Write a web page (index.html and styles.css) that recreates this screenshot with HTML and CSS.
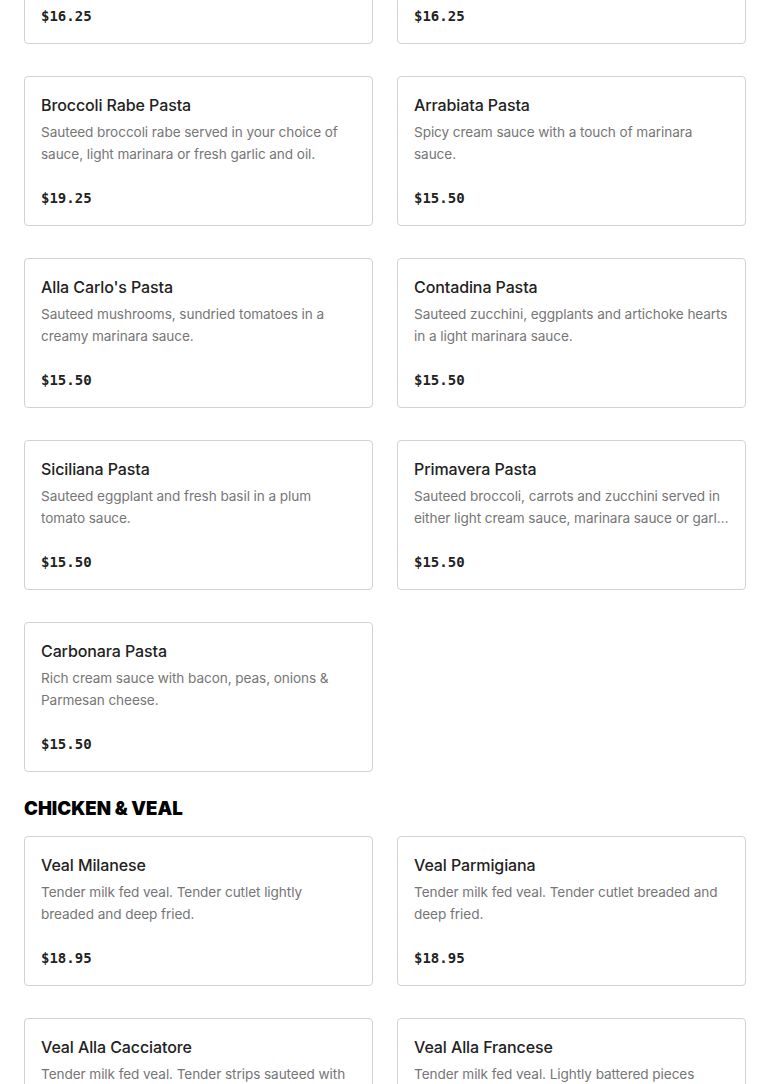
FILE: index.html
```html
<!DOCTYPE html>
<html>
<head>
<meta charset="utf-8">
<link rel="stylesheet" href="styles.css">
</head>
<body>
<main class="menu">
  <section class="section">
    <div class="grid">
      <div class="card"><h3 class="title">Penne alla Vodka</h3><p class="desc">Creamy tomato vodka sauce with a touch of parmesan cheese.</p><div class="price">$16.25</div></div>
      <div class="card"><h3 class="title">Fettuccine Alfredo</h3><p class="desc">Rich cream sauce with butter and parmesan cheese.</p><div class="price">$16.25</div></div>
      <div class="card"><h3 class="title">Broccoli Rabe Pasta</h3><p class="desc">Sauteed broccoli rabe served in your choice of sauce, light marinara or fresh garlic and oil.</p><div class="price">$19.25</div></div>
      <div class="card"><h3 class="title">Arrabiata Pasta</h3><p class="desc">Spicy cream sauce with a touch of marinara sauce.</p><div class="price">$15.50</div></div>
      <div class="card"><h3 class="title">Alla Carlo's Pasta</h3><p class="desc">Sauteed mushrooms, sundried tomatoes in a creamy marinara sauce.</p><div class="price">$15.50</div></div>
      <div class="card"><h3 class="title">Contadina Pasta</h3><p class="desc">Sauteed zucchini, eggplants and artichoke hearts in a light marinara sauce.</p><div class="price">$15.50</div></div>
      <div class="card"><h3 class="title">Siciliana Pasta</h3><p class="desc">Sauteed eggplant and fresh basil in a plum tomato sauce.</p><div class="price">$15.50</div></div>
      <div class="card"><h3 class="title">Primavera Pasta</h3><p class="desc">Sauteed broccoli, carrots and zucchini served in either light cream sauce, marinara sauce or garlic and oil.</p><div class="price">$15.50</div></div>
      <div class="card"><h3 class="title">Carbonara Pasta</h3><p class="desc">Rich cream sauce with bacon, peas, onions &amp; Parmesan cheese.</p><div class="price">$15.50</div></div>
    </div>
  </section>
  <section class="section">
    <h2 class="heading">CHICKEN &amp; VEAL</h2>
    <div class="grid">
      <div class="card"><h3 class="title">Veal Milanese</h3><p class="desc">Tender milk fed veal. Tender cutlet lightly breaded and deep fried.</p><div class="price">$18.95</div></div>
      <div class="card"><h3 class="title">Veal Parmigiana</h3><p class="desc">Tender milk fed veal. Tender cutlet breaded and deep fried.</p><div class="price">$18.95</div></div>
      <div class="card"><h3 class="title">Veal Alla Cacciatore</h3><p class="desc">Tender milk fed veal. Tender strips sauteed with mushrooms, peppers and onions.</p><div class="price">$18.95</div></div>
      <div class="card"><h3 class="title">Veal Alla Francese</h3><p class="desc">Tender milk fed veal. Lightly battered pieces sauteed in lemon butter sauce.</p><div class="price">$18.95</div></div>
    </div>
  </section>
</main>
</body>
</html>
```
FILE: styles.css
```css
html, body { margin: 0; padding: 0; background: #fff; }
body { font-family: Inter, "Liberation Sans", sans-serif; color: #222; }
.menu { padding: 0 24px; margin-top: -106px; }
.section { margin-bottom: 22px; }
.grid { display: grid; grid-template-columns: 1fr 1fr; column-gap: 24px; row-gap: 32px; }
.card {
  border: 1px solid #d2d2d2; border-radius: 4px; padding: 16px;
  display: flex; flex-direction: column; height: 150px; box-sizing: border-box;
}
.title { margin: 0; font-size: 16px; line-height: 24px; font-weight: 500; color: #222; letter-spacing: -0.1px; }
.desc {
  margin: 4px 0 0; font-size: 13.6px; line-height: 22px; color: #767676; letter-spacing: -0.08px;
  display: -webkit-box; -webkit-line-clamp: 2; -webkit-box-orient: vertical; overflow: hidden;
}
.price { margin-top: auto; font-family: "DejaVu Sans Mono", "Liberation Mono", monospace; font-weight: 700; font-size: 14px; line-height: 22px; color: #222; }
.heading { margin: 0 0 14px; font-size: 18.6px; line-height: 28px; font-weight: 900; color: #000; letter-spacing: 0; }
```
